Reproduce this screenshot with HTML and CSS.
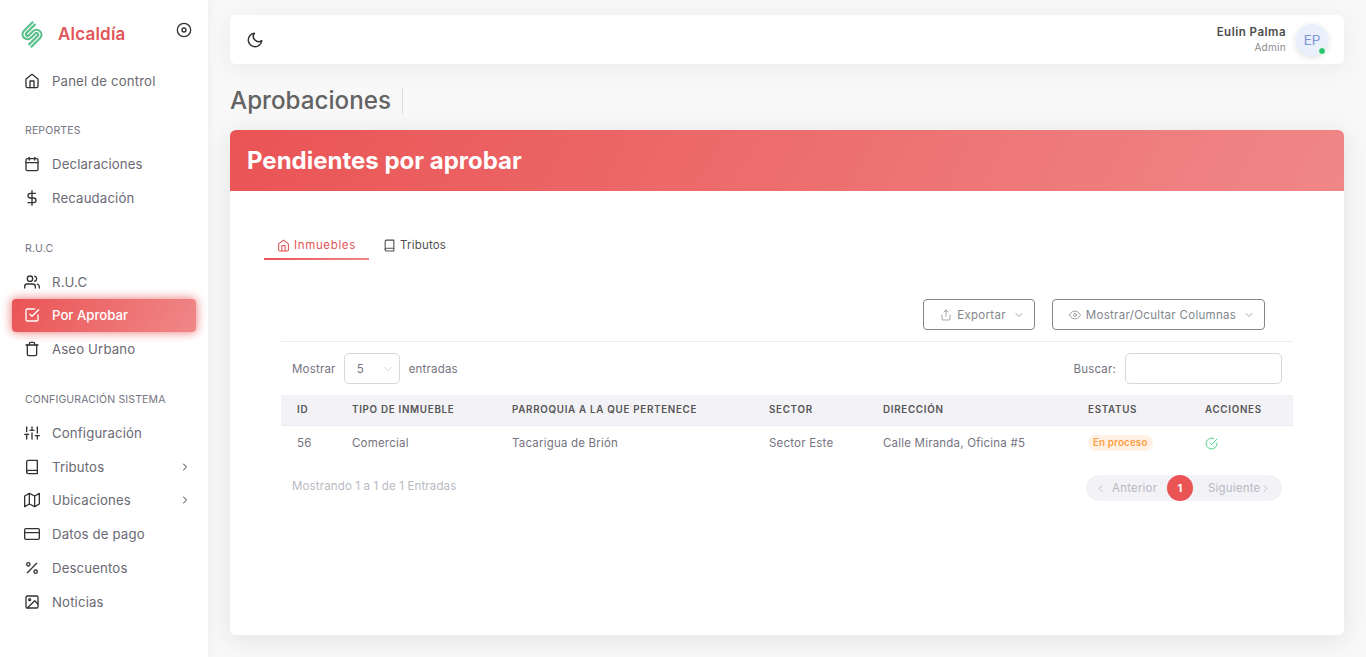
FILE: index.html
```html
<!DOCTYPE html>
<html lang="es">
<head>
<meta charset="utf-8">
<title>Aprobaciones</title>
<link rel="stylesheet" href="styles.css">
</head>
<body>
<svg class="defs" width="0" height="0" aria-hidden="true">
  <symbol id="i-home" viewBox="0 0 24 24"><path d="M3 9l9-7 9 7v11a2 2 0 0 1-2 2H5a2 2 0 0 1-2-2z"/><polyline points="9 22 9 12 15 12 15 22"/></symbol>
  <symbol id="i-calendar" viewBox="0 0 24 24"><rect x="3" y="4" width="18" height="18" rx="2"/><line x1="16" y1="2" x2="16" y2="6"/><line x1="8" y1="2" x2="8" y2="6"/><line x1="3" y1="10" x2="21" y2="10"/></symbol>
  <symbol id="i-dollar" viewBox="0 0 24 24"><line x1="12" y1="1" x2="12" y2="23"/><path d="M17 5H9.5a3.5 3.5 0 0 0 0 7h5a3.5 3.5 0 0 1 0 7H6"/></symbol>
  <symbol id="i-users" viewBox="0 0 24 24"><path d="M17 21v-2a4 4 0 0 0-4-4H5a4 4 0 0 0-4 4v2"/><circle cx="9" cy="7" r="4"/><path d="M23 21v-2a4 4 0 0 0-3-3.87"/><path d="M16 3.13a4 4 0 0 1 0 7.75"/></symbol>
  <symbol id="i-check-square" viewBox="0 0 24 24"><polyline points="9 11 12 14 22 4"/><path d="M21 12v7a2 2 0 0 1-2 2H5a2 2 0 0 1-2-2V5a2 2 0 0 1 2-2h11"/></symbol>
  <symbol id="i-trash" viewBox="0 0 24 24"><polyline points="3 6 5 6 21 6"/><path d="M19 6v14a2 2 0 0 1-2 2H7a2 2 0 0 1-2-2V6m3 0V4a2 2 0 0 1 2-2h4a2 2 0 0 1 2 2v2"/></symbol>
  <symbol id="i-sliders" viewBox="0 0 24 24"><line x1="4" y1="21" x2="4" y2="14"/><line x1="4" y1="10" x2="4" y2="3"/><line x1="12" y1="21" x2="12" y2="12"/><line x1="12" y1="8" x2="12" y2="3"/><line x1="20" y1="21" x2="20" y2="16"/><line x1="20" y1="12" x2="20" y2="3"/><line x1="1" y1="14" x2="7" y2="14"/><line x1="9" y1="8" x2="15" y2="8"/><line x1="17" y1="16" x2="23" y2="16"/></symbol>
  <symbol id="i-book" viewBox="0 0 24 24"><path d="M4 19.5A2.5 2.5 0 0 1 6.5 17H20"/><path d="M6.5 2H20v20H6.5A2.5 2.5 0 0 1 4 19.5v-15A2.5 2.5 0 0 1 6.5 2z"/></symbol>
  <symbol id="i-map" viewBox="0 0 24 24"><polygon points="1 6 1 22 8 18 16 22 23 18 23 2 16 6 8 2 1 6"/><line x1="8" y1="2" x2="8" y2="18"/><line x1="16" y1="6" x2="16" y2="22"/></symbol>
  <symbol id="i-card" viewBox="0 0 24 24"><rect x="1" y="4" width="22" height="16" rx="2"/><line x1="1" y1="10" x2="23" y2="10"/></symbol>
  <symbol id="i-percent" viewBox="0 0 24 24"><line x1="19" y1="5" x2="5" y2="19"/><circle cx="6.5" cy="6.5" r="2.5"/><circle cx="17.5" cy="17.5" r="2.5"/></symbol>
  <symbol id="i-image" viewBox="0 0 24 24"><rect x="3" y="3" width="18" height="18" rx="2"/><circle cx="8.5" cy="8.5" r="1.5"/><polyline points="21 15 16 10 5 21"/></symbol>
  <symbol id="i-moon" viewBox="0 0 24 24"><path d="M21 12.79A9 9 0 1 1 11.21 3 7 7 0 0 0 21 12.79z"/></symbol>
  <symbol id="i-right" viewBox="0 0 24 24"><polyline points="9 18 15 12 9 6"/></symbol>
  <symbol id="i-left" viewBox="0 0 24 24"><polyline points="15 18 9 12 15 6"/></symbol>
  <symbol id="i-down" viewBox="0 0 24 24"><polyline points="6 9 12 15 18 9"/></symbol>
  <symbol id="i-share" viewBox="0 0 24 24"><path d="M4 12v8a2 2 0 0 0 2 2h12a2 2 0 0 0 2-2v-8"/><polyline points="16 6 12 2 8 6"/><line x1="12" y1="2" x2="12" y2="15"/></symbol>
  <symbol id="i-eye" viewBox="0 0 24 24"><path d="M1 12s4-8 11-8 11 8 11 8-4 8-11 8-11-8-11-8z"/><circle cx="12" cy="12" r="3"/></symbol>
  <symbol id="i-check-circle" viewBox="0 0 24 24"><path d="M22 11.08V12a10 10 0 1 1-5.93-9.14"/><polyline points="22 4 12 14.01 9 11.01"/></symbol>
  <symbol id="i-disc" viewBox="0 0 24 24"><circle cx="12" cy="12" r="10"/><circle cx="12" cy="12" r="3"/></symbol>
</svg>

<div class="app">
  <aside class="sidebar">
    <div class="brand">
      <svg class="logo" viewBox="0 0 26 27" width="26" height="27">
        <g transform="rotate(-45 13 13.5)">
          <path d="M22 5.250H10A4.950 4.950 0 0 0 10 15.150H16A1.650 1.650 0 0 1 16 18.450H4"/>
          <path d="M22 8.550H10A1.650 1.650 0 0 0 10 11.850H16A4.950 4.950 0 0 1 16 21.750H4"/>
        </g>
      </svg>
      <span class="brand-name">Alcaldía</span>
      <svg class="icon disc"><use href="#i-disc"/></svg>
    </div>
    <nav class="nav">
      <a class="item"><svg class="icon"><use href="#i-home"/></svg><span>Panel de control</span></a>
      <div class="section">REPORTES</div>
      <a class="item"><svg class="icon"><use href="#i-calendar"/></svg><span>Declaraciones</span></a>
      <a class="item"><svg class="icon"><use href="#i-dollar"/></svg><span>Recaudación</span></a>
      <div class="section">R.U.C</div>
      <a class="item"><svg class="icon"><use href="#i-users"/></svg><span>R.U.C</span></a>
      <a class="item active"><svg class="icon"><use href="#i-check-square"/></svg><span>Por Aprobar</span></a>
      <a class="item"><svg class="icon"><use href="#i-trash"/></svg><span>Aseo Urbano</span></a>
      <div class="section">CONFIGURACIÓN SISTEMA</div>
      <a class="item"><svg class="icon"><use href="#i-sliders"/></svg><span>Configuración</span></a>
      <a class="item"><svg class="icon"><use href="#i-book"/></svg><span>Tributos</span><svg class="chev"><use href="#i-right"/></svg></a>
      <a class="item"><svg class="icon"><use href="#i-map"/></svg><span>Ubicaciones</span><svg class="chev"><use href="#i-right"/></svg></a>
      <a class="item"><svg class="icon"><use href="#i-card"/></svg><span>Datos de pago</span></a>
      <a class="item"><svg class="icon"><use href="#i-percent"/></svg><span>Descuentos</span></a>
      <a class="item"><svg class="icon"><use href="#i-image"/></svg><span>Noticias</span></a>
    </nav>
  </aside>

  <main class="main">
    <header class="topbar">
      <svg class="icon moon"><use href="#i-moon"/></svg>
      <div class="user">
        <div class="user-text">
          <div class="user-name">Eulin Palma</div>
          <div class="user-role">Admin</div>
        </div>
        <div class="avatar">EP<span class="online"></span></div>
      </div>
    </header>

    <div class="title-row"><h1 class="title">Aprobaciones</h1></div>

    <section class="card">
      <div class="card-head">Pendientes por aprobar</div>
      <div class="card-body">
        <div class="tabs">
          <a class="tab tab-on"><svg class="tab-icon"><use href="#i-home"/></svg>Inmuebles</a>
          <a class="tab"><svg class="tab-icon"><use href="#i-book"/></svg>Tributos</a>
        </div>
        <div class="table-wrap">
          <div class="toolbar">
            <button class="btn btn-export"><svg class="btn-icon"><use href="#i-share"/></svg>Exportar<svg class="btn-chev"><use href="#i-down"/></svg></button>
            <button class="btn btn-cols"><svg class="btn-icon"><use href="#i-eye"/></svg>Mostrar/Ocultar Columnas<svg class="btn-chev"><use href="#i-down"/></svg></button>
          </div>
          <div class="filters">
            <div class="filter-left">Mostrar
              <div class="select"><span>5</span><svg class="select-chev"><use href="#i-down"/></svg></div>
              entradas</div>
            <div class="filter-right">Buscar:<div class="search"></div></div>
          </div>
          <table class="table">
            <colgroup><col class="c1"><col class="c2"><col class="c3"><col class="c4"><col class="c5"><col class="c6"><col class="c7"></colgroup>
            <thead>
              <tr><th>ID</th><th>TIPO DE INMUEBLE</th><th>PARROQUIA A LA QUE PERTENECE</th><th>SECTOR</th><th>DIRECCIÓN</th><th>ESTATUS</th><th>ACCIONES</th></tr>
            </thead>
            <tbody>
              <tr><td>56</td><td>Comercial</td><td>Tacarigua de Brión</td><td>Sector Este</td><td>Calle Miranda, Oficina #5</td><td><span class="badge">En proceso</span></td><td><svg class="act"><use href="#i-check-circle"/></svg></td></tr>
            </tbody>
          </table>
          <div class="table-foot">
            <div class="info">Mostrando 1 a 1 de 1 Entradas</div>
            <div class="pager">
              <span class="pg pg-prev"><svg class="pg-chev"><use href="#i-left"/></svg>Anterior</span>
              <span class="pg-num">1</span>
              <span class="pg pg-next">Siguiente<svg class="pg-chev"><use href="#i-right"/></svg></span>
            </div>
          </div>
        </div>
      </div>
    </section>
  </main>
</div>
</body>
</html>
```

FILE: styles.css
```css
* { box-sizing: border-box; }
html, body { height: 100%; }
body {
  margin: 0;
  background: #f8f8f8;
  font-family: Inter, "Open Sans", "Liberation Sans", sans-serif;
  font-size: 13px;
  color: #75737f;
  overflow: hidden;
}
.defs { position: absolute; }
svg { fill: none; stroke: currentColor; stroke-width: 2; stroke-linecap: round; stroke-linejoin: round; flex: none; }
.app { display: flex; height: 657px; }

/* Sidebar */
.sidebar {
  width: 208px;
  flex: none;
  background: #fff;
  box-shadow: 0 0 10px rgba(34, 41, 47, .06);
  padding: 0 12px;
}
.brand { height: 64px; display: flex; align-items: center; padding: 4px 4px 0 7px; }
.logo { stroke: #5cbf8c; stroke-width: 2.200; margin-top: 1px; overflow: visible; }
.brand-name { margin-left: 13px; font-size: 17px; font-weight: 600; letter-spacing: .2px; color: #e2555a; flex: 1; }
.icon { width: 16px; height: 16px; color: #333; }
.disc { margin-top: -9px; }
.nav { display: flex; flex-direction: column; }
.item {
  height: 33.800px;
  display: flex;
  align-items: center;
  padding-left: 12px;
  border-radius: 4px;
  color: #6b6974;
  font-size: 13.200px;
  letter-spacing: .15px;
}
.item > span { margin-left: 12px; flex: 1; }
.item .chev { width: 12px; height: 12px; color: #333; margin-right: 5px; }
.item.active {
  color: #fff;
  font-weight: 500;
  letter-spacing: 0;
  background: linear-gradient(118deg, #ea5455, rgba(234, 84, 85, .7));
  box-shadow: 0 0 10px 1px rgba(234, 84, 85, .7);
}
.item.active .icon { color: #fff; }
.section {
  height: 49.700px;
  padding: 25.500px 0 0 13px;
  font-size: 10.500px;
  line-height: 16px;
  letter-spacing: .15px;
  color: #75737f;
}

/* Main */
.main { flex: 1; min-width: 0; display: flex; flex-direction: column; padding: 15px 22px 22px; }
.topbar {
  height: 49px;
  flex: none;
  background: #fff;
  border-radius: 6px;
  box-shadow: 0 4px 24px rgba(34, 41, 47, .06);
  display: flex;
  align-items: center;
  justify-content: space-between;
  padding: 0 16px;
}
.moon { width: 18px; height: 18px; }
.user { display: flex; align-items: center; }
.user-text { text-align: right; margin-right: 10px; }
.user-name { font-size: 11.500px; font-weight: 600; color: #4b4b4b; line-height: 16px; letter-spacing: .5px; margin-top: -1px; }
.user-role { font-size: 10px; color: #8b8b8b; line-height: 14px; letter-spacing: .3px; }
.avatar {
  position: relative;
  width: 32px;
  height: 32px;
  border-radius: 50%;
  background: #e9f0fb;
  box-shadow: 0 2px 6px rgba(34, 41, 47, .15);
  color: #7f95d8;
  font-size: 13.500px;
  display: flex;
  align-items: center;
  justify-content: center;
}
.online {
  position: absolute;
  right: 2px;
  bottom: 1px;
  width: 8px;
  height: 8px;
  border-radius: 50%;
  background: #28c76f;
  border: 1px solid #fff;
}
.title-row { height: 66px; flex: none; display: flex; align-items: flex-start; padding-top: 22.500px; }
.title {
  margin: 0;
  font-size: 24.200px;
  font-weight: 500;
  line-height: 27px;
  color: #636363;
  padding-right: 11px;
  border-right: 1px solid #d6dce1;
}

/* Card */
.card {
  flex: 1;
  background: #fff;
  border-radius: 6px;
  box-shadow: 0 4px 24px rgba(34, 41, 47, .1);
  display: flex;
  flex-direction: column;
  overflow: hidden;
}
.card-head {
  height: 61px;
  flex: none;
  display: flex;
  align-items: center;
  padding-left: 17px;
  color: #fff;
  font-size: 24px;
  font-weight: 700;
  background: linear-gradient(118deg, #ea5455, rgba(234, 84, 85, .7));
}
.card-body { flex: 1; padding: 37px 51px 0 34px; }
.tabs { display: flex; gap: 1px; height: 32px; }
.tab {
  position: relative;
  height: 32px;
  display: flex;
  align-items: center;
  padding: 2px 13px 0;
  font-size: 11.500px;
  letter-spacing: .2px;
  color: #4f4f4f;
}
.tab-on { width: 105px; color: #e2555a; letter-spacing: .65px; }
.tab-on::after {
  content: "";
  position: absolute;
  left: 0;
  right: 0;
  bottom: 0;
  height: 2px;
  background: linear-gradient(118deg, #ea5455, rgba(234, 84, 85, .7));
}
.tab-icon { width: 13px; height: 13px; margin-right: 4px; }
.table-wrap { margin-left: 17px; }
.toolbar {
  display: flex;
  justify-content: flex-end;
  gap: 17px;
  padding: 39px 28px 11px 0;
  border-bottom: 1px solid #ebe9f1;
}
.btn {
  height: 31px;
  display: flex;
  align-items: center;
  justify-content: center;
  background: #fff;
  border: 1px solid #82868b;
  border-radius: 4px;
  font: inherit;
  font-size: 11.500px;
  letter-spacing: .3px;
  color: #82868b;
  padding: 0 0 0 7px;
}
.btn-export { width: 112px; }
.btn-cols { width: 213px; }
.btn-icon { width: 12px; height: 12px; margin-right: 5px; stroke-width: 1.500; }
.btn-chev { width: 12px; height: 12px; margin-left: 7px; stroke-width: 1.500; }
.filters {
  display: flex;
  justify-content: space-between;
  align-items: center;
  padding: 11px;
  font-size: 11.500px;
  letter-spacing: .2px;
}
.filter-left, .filter-right { display: flex; align-items: center; }
.select {
  width: 56px;
  height: 31px;
  margin: 0 9px 0 8px;
  padding: 0 5px 0 12px;
  border: 1px solid #d8d6de;
  border-radius: 5px;
  display: flex;
  align-items: center;
  justify-content: space-between;
}
.select-chev { width: 12px; height: 12px; color: #c4c4c8; stroke-width: 1.500; }
.search { width: 157px; height: 31px; margin-left: 9px; border: 1px solid #d8d6de; border-radius: 5px; }
.table { width: 100%; table-layout: fixed; border-collapse: collapse; }
.c1 { width: 55px; } .c2 { width: 160px; } .c3 { width: 257px; } .c4 { width: 114px; }
.c5 { width: 205px; } .c6 { width: 117px; } .c7 { width: 104px; }
th {
  height: 30px;
  padding: 0 0 0 16px;
  text-align: left;
  background: #f3f2f7;
  border-bottom: 1px solid #ebe9f1;
  font-size: 9.800px;
  font-weight: 600;
  letter-spacing: .7px;
  color: #555;
  white-space: nowrap;
}
td { height: 35px; padding: 1px 0 0 16px; font-size: 11.500px; letter-spacing: .2px; white-space: nowrap; }
.badge {
  display: inline-block;
  padding: 0 5px;
  height: 16px;
  line-height: 16px;
  border-radius: 8px;
  background: #fff1e3;
  color: #ff9f43;
  font-size: 9.800px;
  font-weight: 600;
  letter-spacing: .15px;
}
.act { width: 13px; height: 13px; color: #28c76f; stroke-width: 1.500; display: block; }
.table-foot { display: flex; justify-content: space-between; align-items: flex-start; padding: 15px 11px 0; }
.info { font-size: 11.500px; letter-spacing: .15px; color: #b9b9c3; line-height: 22px; }
.pager {
  width: 196px;
  height: 26px;
  border-radius: 13px;
  background: #f3f2f7;
  display: flex;
  align-items: center;
  font-size: 11.500px;
  letter-spacing: .2px;
  color: #b9b9c3;
}
.pg { display: flex; align-items: center; }
.pg-prev { width: 81px; padding-left: 9px; }
.pg-next { padding-left: 15px; }
.pg-chev { width: 11px; height: 11px; }
.pg-prev .pg-chev { margin-right: 6px; }
.pg-num {
  width: 26px;
  height: 26px;
  border-radius: 50%;
  background: #ea5455;
  color: #fff;
  font-weight: 700;
  font-size: 11px;
  display: flex;
  align-items: center;
  justify-content: center;
}
```
